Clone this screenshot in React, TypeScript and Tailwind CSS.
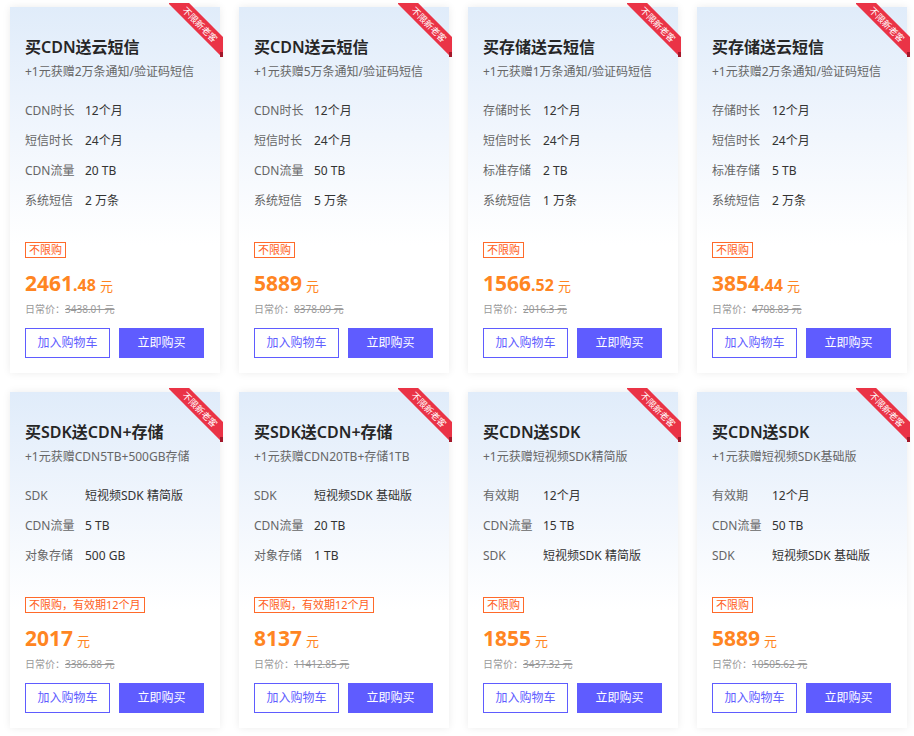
import React from 'react';

type Pkg = {
    title: string;
    sub: string;
    specs: [string, string][];
    tag: string;
    price: string;
    cents?: string;
    orig: string;
};

const packages: Pkg[] = [
    {
        title: '买CDN送云短信',
        sub: '+1元获赠2万条通知/验证码短信',
        specs: [['CDN时长', '12个月'], ['短信时长', '24个月'], ['CDN流量', '20 TB'], ['系统短信', '2 万条']],
        tag: '不限购',
        price: '2461',
        cents: '.48',
        orig: '3438.01',
    },
    {
        title: '买CDN送云短信',
        sub: '+1元获赠5万条通知/验证码短信',
        specs: [['CDN时长', '12个月'], ['短信时长', '24个月'], ['CDN流量', '50 TB'], ['系统短信', '5 万条']],
        tag: '不限购',
        price: '5889',
        orig: '8378.09',
    },
    {
        title: '买存储送云短信',
        sub: '+1元获赠1万条通知/验证码短信',
        specs: [['存储时长', '12个月'], ['短信时长', '24个月'], ['标准存储', '2 TB'], ['系统短信', '1 万条']],
        tag: '不限购',
        price: '1566',
        cents: '.52',
        orig: '2016.3',
    },
    {
        title: '买存储送云短信',
        sub: '+1元获赠2万条通知/验证码短信',
        specs: [['存储时长', '12个月'], ['短信时长', '24个月'], ['标准存储', '5 TB'], ['系统短信', '2 万条']],
        tag: '不限购',
        price: '3854',
        cents: '.44',
        orig: '4708.83',
    },
    {
        title: '买SDK送CDN+存储',
        sub: '+1元获赠CDN5TB+500GB存储',
        specs: [['SDK', '短视频SDK 精简版'], ['CDN流量', '5 TB'], ['对象存储', '500 GB']],
        tag: '不限购，有效期12个月',
        price: '2017',
        orig: '3386.88',
    },
    {
        title: '买SDK送CDN+存储',
        sub: '+1元获赠CDN20TB+存储1TB',
        specs: [['SDK', '短视频SDK 基础版'], ['CDN流量', '20 TB'], ['对象存储', '1 TB']],
        tag: '不限购，有效期12个月',
        price: '8137',
        orig: '11412.85',
    },
    {
        title: '买CDN送SDK',
        sub: '+1元获赠短视频SDK精简版',
        specs: [['有效期', '12个月'], ['CDN流量', '15 TB'], ['SDK', '短视频SDK 精简版']],
        tag: '不限购',
        price: '1855',
        orig: '3437.32',
    },
    {
        title: '买CDN送SDK',
        sub: '+1元获赠短视频SDK基础版',
        specs: [['有效期', '12个月'], ['CDN流量', '50 TB'], ['SDK', '短视频SDK 基础版']],
        tag: '不限购',
        price: '5889',
        orig: '10505.62',
    },
];

// corner ribbon "不限新老客"
const Ribbon = () => (
    <div className="absolute -top-[4px] -right-[3px] w-[54px] h-[54px] overflow-hidden">
        <div className="absolute top-[14px] -right-[19px] w-[84px] h-[15px] rotate-45 bg-[#ea3346] flex items-center justify-center">
            <span className="text-white text-[9px] leading-[11px]">不限新老客</span>
        </div>
        <div className="absolute bottom-0 right-0 w-[3px] h-[5px] bg-[#a3182a]" />
    </div>
);

const Card: React.FC<{ p: Pkg }> = ({ p }) => (
    <div className="relative w-[210px] bg-linear-to-b from-[#e0ecfa] via-[#f1f6fd] via-35% to-white to-65% shadow-[0_0_8px_rgba(0,0,0,0.08)] px-[15px] pt-[28px] pb-[15px]">
        <Ribbon />
        <h3 className="text-[16px] leading-[24px] font-semibold text-[#262626]">{p.title}</h3>
        <p className="mt-[4px] text-[12px] leading-[18px] text-[#666]">{p.sub}</p>
        <div className="mt-[15px]">
            {p.specs.map(([k, v]) => (
                <div key={k} className="flex items-center h-[30px] text-[12px]">
                    <span className="w-[60px] text-[#666]">{k}</span>
                    <span className="text-[#333]">{v}</span>
                </div>
            ))}
        </div>
        <div className="mt-[26px] flex">
            <span className="border border-[#ff6a2a] text-[#ff5f22] text-[11px] leading-[14px] px-[3px]">{p.tag}</span>
        </div>
        <div className="mt-[11px] h-[28px] flex items-baseline text-[#ff8522]">
            <span className="text-[21px] font-bold leading-[28px]">{p.price}</span>
            {p.cents && <span className="text-[16px] font-bold">{p.cents}</span>}
            <span className="ml-[4px] text-[13px]">元</span>
        </div>
        <div className="mt-[4px] text-[10px] leading-[16px] text-[#999]">
            日常价：<span className="line-through">{p.orig} 元</span>
        </div>
        <div className="mt-[11px] flex gap-[9px]">
            <button className="w-[85px] h-[30px] border border-[#5f5cff] text-[#5f5cff] text-[12px] bg-white">加入购物车</button>
            <button className="w-[85px] h-[30px] bg-[#5f5cff] text-white text-[12px]">立即购买</button>
        </div>
    </div>
);

export default function App() {
    return (
        <div className="w-[914px] h-[736px] bg-white overflow-hidden font-['Noto_Sans','Noto_Sans_CJK_SC',sans-serif]">
            <div className="grid grid-cols-[repeat(4,210px)] gap-[19px] pl-[10px] pt-[7px] items-start">
                {packages.map((p, i) => (
                    <Card key={i} p={p} />
                ))}
            </div>
        </div>
    );
}
